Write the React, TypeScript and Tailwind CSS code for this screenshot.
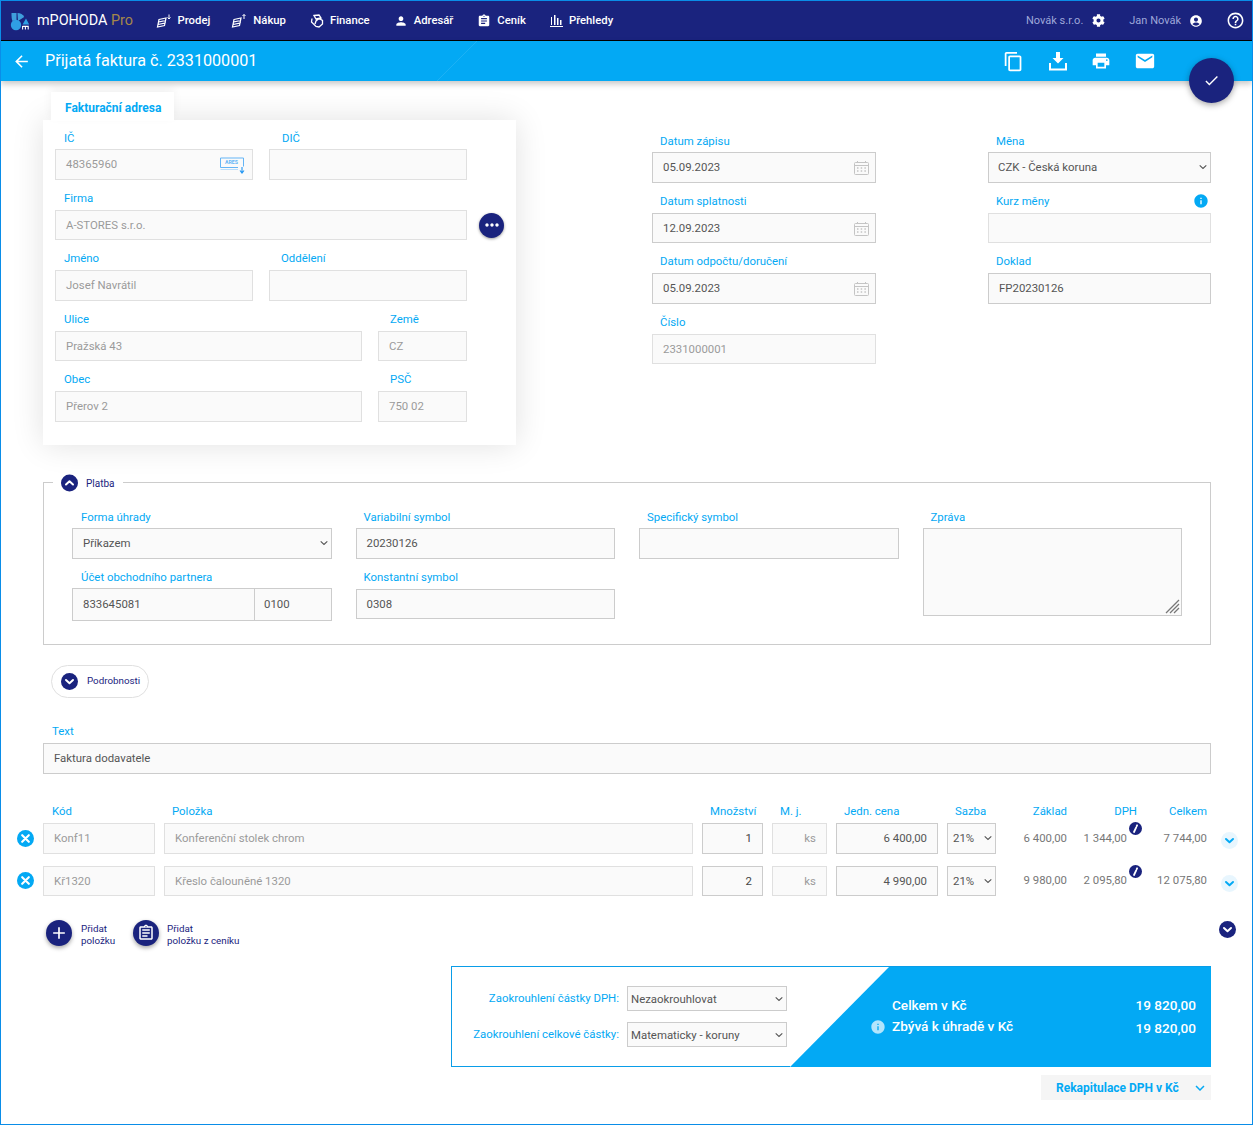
import React from "react";
import { FaCog } from "react-icons/fa";
import {
  MdAccountCircle, MdAdd, MdArrowBack, MdAssignment, MdCheck, MdContentCopy, MdEmail,
  MdHelpOutline, MdInfo, MdKeyboardArrowDown, MdMoreHoriz, MdOutlineAssignment, MdPerson, MdPrint,
} from "react-icons/md";

const Coins = ({ up }: { up?: boolean }) => (
  <svg width="16" height="16" viewBox="0 0 16 16" fill="none" stroke="white" strokeWidth="1.2">
    <path d="M3 6.5 L10 5 L9.5 7.5 L2.5 9 Z M2.5 9 L9.5 7.5 L9 10 L2 11.5 Z M2 11.5 L9 10 L8.5 12.5 L1.5 14 Z" />
    <path d={up ? "M13 6V1.5M11.5 3L13 1.5L14.5 3" : "M13 1.5V6M11.5 4.5L13 6L14.5 4.5"} strokeWidth="1" />
  </svg>
);
const FinanceIcon = () => (
  <svg width="14" height="14" viewBox="0 0 14 14" fill="none" stroke="white" strokeWidth="1.3">
    <path d="M4 1.5 L9 1 L11 4 L6 5 Z M2 4.5 L1.5 8 L6 12.5 L9 13 L12.5 10 L12.5 6.5 L9 4.5 L6 7 L5 10" />
  </svg>
);
const BarsIcon = () => (
  <svg width="13" height="13" viewBox="0 0 13 13" fill="white">
    <path d="M1 3h1v8H1zM4 1h1.5v10H4zM7 4h1.5v7H7zM10 6h1.5v5H10zM0 12h13v1H0z" />
  </svg>
);
const Logo = () => (
  <svg width="20" height="20" viewBox="0 0 20 20" className="overflow-visible">
    <path d="M1.5 2 H6.5 V9.2 L2.5 10 C1.6 8 1.5 6 1.5 2 Z" fill="#3f9fdc" />
    <path d="M7.5 2 C10.5 2 13 3.6 14.2 6 L8 10 Z" fill="#3f9fdc" />
    <circle cx="6" cy="14" r="5.2" fill="#2f9fe4" />
    <path d="M16 7.5 L19.2 13.5 L12.6 13.5 Z" fill="#2f9fe4" />
    <path d="M12.6 15v3.6M12.6 15.4h5.6v3.2M15.4 15.4v3.2" stroke="white" strokeWidth="1.1" fill="none" />
  </svg>
);
const Calendar = () => (
  <svg width="15" height="14" viewBox="0 0 15 14" fill="none" stroke="#c4c4c4" strokeWidth="1">
    <rect x="0.5" y="1.5" width="14" height="12" rx="1" />
    <path d="M3.5 0v2M11.5 0v2M1 4.5h13" />
    <path d="M3 7h1.5M6.7 7h1.5M10.4 7h1.5M3 10h1.5M6.7 10h1.5M10.4 10h1.5" strokeWidth="1.4" />
  </svg>
);
const Tray = () => (
  <svg width="20" height="20" viewBox="0 0 20 20" fill="white">
    <path d="M8 1h4v6h3.5L10 12.5 4.5 7H8z" />
    <path d="M1 12h2v5.5h14V12h2v7.5H1z" />
  </svg>
);
const Ares = () => (
  <svg width="26" height="17" viewBox="0 0 26 17" fill="none">
    <path d="M23.5 9.5V1H.5v9.5H18" stroke="#64b5f6" strokeWidth="1" />
    <path d="M.5 12.5H18" stroke="#bbdefb" strokeWidth="1" />
    <text x="5" y="7.4" fontSize="5.2" fontWeight="700" fill="#64b5f6">ARES</text>
    <path d="M22 10v5.5M20 13.5l2 2.5 2-2.5" stroke="#2196f3" strokeWidth="1.1" />
  </svg>
);
const Pencil = () => (
  <svg width="13" height="13" viewBox="0 0 13 13" className="block">
    <circle cx="6.5" cy="6.5" r="6.5" fill="#1a237e" />
    <path d="M5 10 L7.2 5.4 M7.7 4.2 L8.1 3.3" stroke="white" strokeWidth="1.8" strokeLinecap="round" />
  </svg>
);
const Chev = ({ up, color = "white" }: { up?: boolean; color?: string }) => (
  <svg width="11" height="11" viewBox="0 0 11 11" fill="none" stroke={color} strokeWidth="2" strokeLinecap="round" strokeLinejoin="round">
    <path d={up ? "M2 7 L5.5 3.8 L9 7" : "M2 4 L5.5 7.2 L9 4"} />
  </svg>
);
const Cross = () => (
  <svg width="9" height="9" viewBox="0 0 9 9" stroke="white" strokeWidth="2.1" strokeLinecap="round">
    <path d="M1.2 1.2L7.8 7.8M7.8 1.2L1.2 7.8" />
  </svg>
);

const Label = ({ children, className = "" }: { children: React.ReactNode; className?: string }) => (
  <div className={`h-[30px] pb-[3px] flex items-end text-[11.4px] leading-[18px] text-[#03a9f4] ${className}`}>{children}</div>
);
const Box = ({ value, muted, className = "", children }: { value?: string; muted?: boolean; className?: string; children?: React.ReactNode }) => (
  <div className={`h-[30.5px] flex items-center justify-between pl-[10px] pr-[6px] pt-[1.5px] border bg-[#fafafa] text-[11.4px] ${muted ? "border-[#e0e0e0] text-[#9a9a9a]" : "border-[#cccccc] text-[#555555]"} ${className}`}>
    <span>{value}</span>
    {children}
  </div>
);
const Field = ({ label, lc = "pl-[8px]", value, muted, w = "", children }: { label: React.ReactNode; lc?: string; value?: string; muted?: boolean; w?: string; children?: React.ReactNode }) => (
  <div className={w}>
    <Label className={lc}>{label}</Label>
    <Box value={value} muted={muted}>{children}</Box>
  </div>
);
const Sel = ({ value, className = "", pad }: { value: string; className?: string; pad: string }) => (
  <div className={`relative ${className}`}>
    <select defaultValue={value} className={`appearance-none block w-full h-full pt-[1.5px] border border-[#cccccc] bg-[#fafafa] text-[11.4px] text-[#555555] ${pad}`}>
      <option>{value}</option>
    </select>
    <svg width="8" height="5" viewBox="0 0 8 5" fill="none" stroke="#555555" strokeWidth="1.1" className="absolute right-[4px] top-1/2 -translate-y-1/2 pointer-events-none">
      <path d="M.7 .8 L4 4 L7.3 .8" />
    </svg>
  </div>
);
const Circle = ({ size, className = "", children }: { size: string; className?: string; children: React.ReactNode }) => (
  <span className={`inline-flex items-center justify-center rounded-full shrink-0 ${size} ${className}`}>{children}</span>
);
const NavItem = ({ icon, text, className = "" }: { icon: React.ReactNode; text: string; className?: string }) => (
  <div className={`flex items-center gap-[6px] text-[11.3px] font-medium text-white ${className}`}>
    {icon}
    <span className="pt-[1px]">{text}</span>
  </div>
);

const cellM = "h-[30.5px] flex items-center justify-end text-[11.4px] text-[#777777]";
const Row = ({ code, name, qty, price, base, vat, total }: Record<string, string>) => (
  <>
    <Circle size="w-[17px] h-[17px]" className="bg-[#03a9f4]"><Cross /></Circle>
    <Box value={code} muted />
    <Box value={name} muted />
    <Box className="!justify-end !pr-[10px]"><span className="text-[#444444]">{qty}</span></Box>
    <Box muted className="!justify-end !pr-[10px]"><span>ks</span></Box>
    <Box className="!justify-end !pr-[10px]"><span>{price}</span></Box>
    <Sel value="21%" className="h-[30.5px] w-[49px]" pad="pl-[5px]" />
    <div className={cellM}>{base}</div>
    <div className={`${cellM} relative pr-[10px]`}>
      {vat}
      <span className="absolute right-[-5px] top-[-1px]"><Pencil /></span>
    </div>
    <div className={cellM}>{total}</div>
    <Circle size="w-[17px] h-[17px]" className="ml-[4.5px] mt-[5px] bg-[#e8f6fe]"><Chev color="#03a9f4" /></Circle>
  </>
);

export default function App() {
  return (
    <div className="relative w-[1253px] h-[1125px] overflow-hidden border border-[#0a8de8] bg-white [font-family:Roboto,sans-serif]">
      <header className="h-[40px] flex items-center bg-[#1a237e] border-b border-black pl-[9px]">
        <Logo />
        <div className="ml-[7px] mr-[22.5px] text-[14.4px] text-white">mPOHODA <span className="text-[#a5874a]">Pro</span></div>
        <div className="flex items-center gap-6">
          <NavItem icon={<Coins />} text="Prodej" />
          <NavItem icon={<Coins up />} text="Nákup" className="-ml-[3px]" />
          <NavItem icon={<FinanceIcon />} text="Finance" />
          <NavItem icon={<MdPerson size={14} color="white" />} text="Adresář" />
          <NavItem icon={<MdAssignment size={14} color="white" />} text="Ceník" />
          <NavItem icon={<BarsIcon />} text="Přehledy" />
        </div>
        <div className="ml-auto flex items-center text-[11px] text-[#9fa8da] pr-[7px]">
          <span className="pt-[1px]">Novák s.r.o.</span>
          <FaCog size={13} color="white" className="ml-[9px] mr-[24px]" />
          <span className="pt-[1px]">Jan Novák</span>
          <MdAccountCircle size={14} color="white" className="ml-[8px] mr-[23px]" />
          <MdHelpOutline size={19} color="white" />
        </div>
      </header>

      <div className="relative h-[40px] flex items-center bg-[#03a9f4] shadow-[0_3px_6px_rgba(0,0,0,0.22)]">
        <MdArrowBack size={19} color="white" className="ml-[11px] mr-[14px]" />
        <h1 className="text-[16.15px] font-normal text-white">Přijatá faktura č. 2331000001</h1>
        <svg width="50" height="40" viewBox="0 0 50 40" className="absolute left-[434px] top-0">
          <path d="M42 0 L2 40" stroke="white" strokeOpacity="0.1" strokeWidth="1" />
        </svg>
        <div className="absolute left-[1002px] top-[9px] flex items-center gap-[24px] text-white">
          <MdContentCopy size={21} />
          <Tray />
          <MdPrint size={20} className="-ml-px" />
          <MdEmail size={22} className="-ml-px" />
        </div>
      </div>
      <Circle size="w-[45px] h-[45px]" className="absolute left-[1188px] top-[57px] bg-[#1a237e] text-white shadow-[0_2px_6px_rgba(0,0,0,0.35)]"><MdCheck size={17} /></Circle>

      <main className="pt-[11px]">
        <section className="flex pl-[42px]">
          <div className="w-[473px]">
            <div className="relative z-10 ml-[8px] w-[123px] h-[29px] -mb-px flex items-center pl-[14px] pt-[2px] bg-white text-[12px] font-bold text-[#03a9f4] shadow-[0_-4px_10px_rgba(0,0,0,0.05)]">Fakturační adresa</div>
            <div className="h-[325px] flex flex-col pl-[12px] bg-white shadow-[0_0_30px_rgba(0,0,0,0.12)]">
              <div className="flex gap-4 -mt-px">
                <Field w="w-[198px]" label="IČ" lc="pl-[9px] !pb-[2px]" value="48365960" muted><Ares /></Field>
                <Field w="w-[198px]" label="DIČ" lc="pl-[13px] !pb-[2px]" muted />
              </div>
              <div className="flex items-end">
                <Field w="w-[412px]" label="Firma" lc="pl-[9px]" value="A-STORES s.r.o." muted />
                <Circle size="w-[25px] h-[25px]" className="ml-[12px] mb-[2.5px] bg-[#1a237e] text-white shadow-[0_1px_3px_rgba(0,0,0,0.4)]"><MdMoreHoriz size={20} /></Circle>
              </div>
              <div className="flex gap-4">
                <Field w="w-[198px]" label="Jméno" lc="pl-[9px]" value="Josef Navrátil" muted />
                <Field w="w-[198px]" label="Oddělení" lc="pl-[12px]" muted />
              </div>
              <div className="flex gap-4">
                <Field w="w-[307px]" label="Ulice" lc="pl-[9px]" value="Pražská 43" muted />
                <Field w="w-[89px]" label="Země" lc="pl-[12px]" value="CZ" muted />
              </div>
              <div className="flex gap-4">
                <Field w="w-[307px]" label="Obec" lc="pl-[9px]" value="Přerov 2" muted />
                <Field w="w-[89px]" label="PSČ" lc="pl-[12px]" value="750 02" muted />
              </div>
            </div>
          </div>
          <div className="ml-[136px] w-[224px] pt-[30px]">
            <Field label="Datum zápisu" lc="pl-[8px] !pb-[2px]" value="05.09.2023"><Calendar /></Field>
            <Field label="Datum splatnosti" value="12.09.2023"><Calendar /></Field>
            <Field label="Datum odpočtu/doručení" value="05.09.2023"><Calendar /></Field>
            <Field label="Číslo" value="2331000001" muted />
          </div>
          <div className="ml-[112px] w-[223px] pt-[30px]">
            <Label className="pl-[8px] !pb-[2px]">Měna</Label>
            <Sel value="CZK - Česká koruna" className="h-[30.5px]" pad="pl-[9px]" />
            <Field label={<span className="flex w-full items-center justify-between pr-[2px]">Kurz měny<MdInfo size={16} /></span>} muted />
            <Field label="Doklad" value="FP20230126" />
          </div>
        </section>

        <fieldset className="mt-[30px] ml-[42px] mr-[41px] h-[170px] border border-[#cccccc] px-[28px] pt-[8px]">
          <legend className="-ml-[19px] px-[8px] h-[15px] flex items-center gap-[8px] text-[10px] font-normal text-[#1a237e]">
            <Circle size="w-[17px] h-[17px]" className="bg-[#1a237e] translate-y-[0.5px]"><Chev up /></Circle>
            <span className="pt-[1px]">Platba</span>
          </legend>
          <div className="grid grid-cols-4 gap-x-6">
            <div>
              <Label className="pl-[9px] !pb-[2px]">Forma úhrady</Label>
              <Sel value="Příkazem" className="h-[30.5px]" pad="pl-[10px]" />
            </div>
            <Field label="Variabilní symbol" lc="pl-[8px] !pb-[2px]" value="20230126" />
            <Field label="Specifický symbol" lc="pl-[8px] !pb-[2px]" />
            <div className="row-span-2">
              <Label className="pl-[8px] !pb-[2px]">Zpráva</Label>
              <div className="relative h-[88px] border border-[#cccccc] bg-[#fafafa]">
                <svg width="15" height="15" viewBox="0 0 15 15" className="absolute right-[1px] bottom-[1px]" stroke="#777777" strokeWidth="1.3">
                  <path d="M14 1L1 14M14 5L5 14M14 9L9 14" />
                </svg>
              </div>
            </div>
            <div>
              <Label className="pl-[9px]">Účet obchodního partnera</Label>
              <div className="flex h-[33px] -mt-[0.5px] border border-[#cccccc] bg-[#fafafa] text-[11.4px] text-[#555555]">
                <div className="w-[182px] flex items-center pl-[10px] border-r border-[#cccccc]">833645081</div>
                <div className="flex items-center pl-[9px]">0100</div>
              </div>
            </div>
            <Field label="Konstantní symbol" value="0308" />
          </div>
        </fieldset>

        <div className="mt-[20px] ml-[50px] w-[98px] h-[33px] flex items-center pl-[9px] gap-[9px] border border-[#e0e0e0] rounded-full text-[9.8px] font-normal text-[#1a237e]">
          <Circle size="w-[17px] h-[17px]" className="bg-[#1a237e]"><Chev /></Circle>
          Podrobnosti
        </div>

        <div className="ml-[42px] mr-[41px]">
          <div className="h-[45px] pb-[3px] flex items-end pl-[9px] text-[11.4px] leading-[18px] text-[#03a9f4]">Text</div>
          <Box value="Faktura dodavatele" className="w-full" />
        </div>

        <div className="mt-[26.5px] ml-[16px] grid grid-cols-[17px_112px_529px_61px_55px_102px_49px_62px_61px_61px_26px] gap-x-[9px] gap-y-[12px] items-center">
          <div className="col-span-full -mb-[12px] grid grid-cols-subgrid h-[23px] items-center text-[11.4px] text-[#03a9f4]">
            <span />
            <span className="pl-[9px]">Kód</span>
            <span className="pl-[8px]">Položka</span>
            <span className="pl-[8px]">Množství</span>
            <span className="pl-[8px]">M. j.</span>
            <span className="pl-[8px]">Jedn. cena</span>
            <span className="pl-[8px]">Sazba</span>
            <span className="text-right">Základ</span>
            <span className="text-right">DPH</span>
            <span className="text-right">Celkem</span>
            <span />
          </div>
          <Row code="Konf11" name="Konferenční stolek chrom" qty="1" price="6 400,00" base="6 400,00" vat="1 344,00" total="7 744,00" />
          <Row code="Kř1320" name="Křeslo čalouněné 1320" qty="2" price="4 990,00" base="9 980,00" vat="2 095,80" total="12 075,80" />
        </div>

        <div className="mt-[24px] ml-[45px] mr-[16px] h-[26px] flex items-start text-[9.8px] leading-[12px] font-normal text-[#1a237e]">
          <Circle size="w-[26px] h-[26px]" className="bg-[#1a237e] text-white shadow-[0_2px_4px_rgba(0,0,0,0.35)]"><MdAdd size={20} /></Circle>
          <div className="ml-[9px] pt-[3px] w-[52px]">Přidat<br />položku</div>
          <Circle size="w-[26px] h-[26px]" className="bg-[#1a237e] text-white shadow-[0_2px_4px_rgba(0,0,0,0.35)]"><MdOutlineAssignment size={18} /></Circle>
          <div className="ml-[8px] pt-[3px]">Přidat<br />položku z ceníku</div>
          <Circle size="w-[17px] h-[17px]" className="ml-auto mt-[1px] bg-[#1a237e]"><Chev /></Circle>
        </div>

        <div className="mt-[20px] ml-[450px] mr-[41px] flex h-[101px]">
          <div className="w-[339px] pt-[19px] pr-[3px] flex flex-col gap-[11px] border-l border-y border-[#0a9de8]">
            <div className="flex items-center justify-end gap-[8px] text-[11.4px] text-[#03a9f4]">
              Zaokrouhlení částky DPH:
              <Sel value="Nezaokrouhlovat" className="w-[160px] h-[25px]" pad="pl-[3px]" />
            </div>
            <div className="flex items-center justify-end gap-[8px] text-[11.4px] text-[#03a9f4]">
              Zaokrouhlení celkové částky:
              <Sel value="Matematicky - koruny" className="w-[160px] h-[25px]" pad="pl-[3px]" />
            </div>
          </div>
          <div className="flex-1 border-t border-[#0a9de8]">
            <div className="h-full pl-[102px] pr-[15px] pt-[28.5px] text-[13.6px] leading-[18px] font-medium text-white bg-[#03a9f4] [clip-path:polygon(99px_0,100%_0,100%_100%,0_100%)]">
              <div className="flex justify-between"><span>Celkem v Kč</span><span>19 820,00</span></div>
              <div className="relative flex justify-between mt-[3px]">
                <span>Zbývá k úhradě v Kč</span><span className="mt-[2px]">19 820,00</span>
                <MdInfo size={16} className="absolute left-[-22px] top-[2px] text-[#b3e5fc]" />
              </div>
            </div>
          </div>
        </div>

        <div className="mt-[8px] ml-auto mr-[41px] w-[170px] h-[25px] flex items-center pl-[15px] bg-[#f5f5f5] text-[12px] font-bold text-[#03a9f4]">
          Rekapitulace DPH v Kč
          <MdKeyboardArrowDown size={18} className="ml-[12px]" />
        </div>
      </main>
    </div>
  );
}
